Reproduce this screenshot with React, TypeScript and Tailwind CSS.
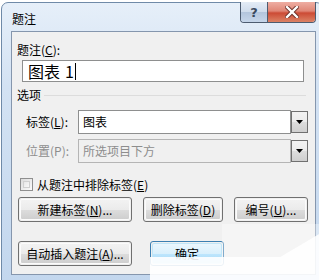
import React from "react";

const font = { fontFamily: '"Microsoft YaHei", "Noto Sans CJK SC", "Noto Sans", sans-serif' };

function Btn({ w, children, def }: { w: string; children: React.ReactNode; def?: boolean }) {
  return (
    <div
      className={`${w} h-[25px] rounded-[3px] border ${def ? "border-[#3c7fb1]" : "border-[#707070]"} p-px`}
    >
      <div
        className={`w-full h-full rounded-[2px] border ${def ? "border-[#c0e6f8]" : "border-[#fbfbfb]"} flex items-center justify-center text-[12px] text-black ${def ? "bg-[linear-gradient(to_bottom,#eaf6fd_0%,#d9f0fc_50%,#bee6fd_51%,#a7d9f5_100%)]" : "bg-[linear-gradient(to_bottom,#f2f2f2_0%,#ebebeb_50%,#dddddd_51%,#cfcfcf_100%)]"}`}
      >
        {children}
      </div>
    </div>
  );
}

function Arrow() {
  return (
    <div className="w-[17px] h-[22px] mt-px border border-[#707070] bg-[linear-gradient(to_bottom,#f2f2f2_0%,#ebebeb_50%,#dddddd_51%,#cfcfcf_100%)] flex items-center justify-center">
      <svg width="7" height="4" viewBox="0 0 7 4">
        <polygon points="0,0 7,0 3.5,4" fill="#000" />
      </svg>
    </div>
  );
}

export default function App() {
  return (
    <div className="w-[319px] h-[280px] bg-white relative overflow-hidden" style={font}>
      <div className="mt-[2px] ml-px w-[322px] h-[280px] rounded-t-[7px] border border-[#6f8aa8] bg-[linear-gradient(to_bottom,#e6eff9_0%,#d3e2f3_30%,#c3d7ee_100%)] flex flex-col">
        {/* title bar */}
        <div className="h-[28px] flex items-start">
          <div className="pl-[10px] pt-[8px] text-[12px] leading-[16px] text-black">题注</div>
          <div className="ml-auto mr-[6px] -mt-px flex h-[21px] rounded-b-[4px] border border-[#4d5c70] border-t-0 overflow-hidden">
            <div className="w-[27px] h-full bg-[linear-gradient(to_bottom,#e4ecf6_0%,#cfdcec_50%,#b3c5dc_51%,#c6d6ea_100%)] border-r border-[#4d5c70] flex items-center justify-center">
              <span className="text-[13px] font-bold text-[#3b4a5e] leading-none" style={{ fontFamily: '"DejaVu Sans", sans-serif' }}>?</span>
            </div>
            <div className="w-[47px] h-full bg-[linear-gradient(to_bottom,#eeaea3_0%,#e08676_45%,#cc4b35_55%,#dc8366_100%)] flex items-center justify-center">
              <svg width="14" height="12" viewBox="0 0 14 12">
                <path d="M2 1 L12 11 M12 1 L2 11" stroke="#6a2f28" strokeWidth="4.2" strokeLinecap="square" />
                <path d="M2 1 L12 11 M12 1 L2 11" stroke="#ffffff" strokeWidth="2.4" strokeLinecap="square" />
              </svg>
            </div>
          </div>
        </div>
        {/* client */}
        <div className="ml-[9px] w-[305px] h-[244px] bg-[#f0f0f0] border border-[#8596ad] flex flex-col text-[12px] leading-[16px] text-black">
          <div className="ml-[5px] mt-[10px] h-[16px]">
            题注(<span className="underline">C</span>):
          </div>
          <div className="ml-[10px] mt-[2px] w-[282px] h-[22px] border border-[#8e8f8f] bg-white flex items-center pl-[5px] text-[16px] leading-[20px]">
            <span>图表</span>
            <span className="ml-[5px]">1</span>
            <span className="ml-px w-px h-[17px] bg-black" />
          </div>
          <div className="mt-[5px] h-[16px] flex items-center">
            <span className="ml-[5px]">选项</span>
            <div className="flex-1 h-px bg-[#dcdcdc] ml-[3px] mr-[9px]" />
          </div>
          <div className="mt-[7px] flex items-center h-[24px]">
            <span className="ml-[14px] w-[52px]">
              标签(<span className="underline">L</span>):
            </span>
            <div className="w-[230px] h-[24px] flex">
              <div className="flex-1 border border-[#8e8f8f] bg-white flex items-center pl-[4px]">图表</div>
              <Arrow />
            </div>
          </div>
          <div className="mt-[5px] flex items-center h-[24px] text-[#8d8d8d]">
            <span className="ml-[14px] w-[52px]">位置(P):</span>
            <div className="w-[230px] h-[24px] flex">
              <div className="flex-1 border border-[#b5b5b5] bg-[#f0f0f0] flex items-center pl-[4px]">所选项目下方</div>
              <Arrow />
            </div>
          </div>
          <div className="mt-[15px] flex items-center h-[13px]">
            <div className="ml-[8px] w-[13px] h-[13px] border border-[#8f8f8f] bg-[linear-gradient(135deg,#dcdcdc,#fbfbfb)] p-[2px]">
              <div className="w-full h-full border border-[#d0d0d0] bg-[linear-gradient(135deg,#e8e8e8,#f8f8f8)]" />
            </div>
            <span className="ml-[4px]">
              从题注中排除标签(<span className="underline">E</span>)
            </span>
          </div>
          <div className="mt-[6px] ml-[6px] flex gap-[11px]">
            <Btn w="w-[114px]">
              新建标签(<span className="underline">N</span>)...
            </Btn>
            <Btn w="w-[80px]">
              删除标签(<span className="underline">D</span>)
            </Btn>
            <Btn w="w-[74px]">
              编号(<span className="underline">U</span>)...
            </Btn>
          </div>
          <div className="mt-[19px] ml-[6px] flex gap-[18px]">
            <Btn w="w-[114px]">
              自动插入题注(<span className="underline">A</span>)...
            </Btn>
            <Btn w="w-[74px]" def>
              确定
            </Btn>
          </div>
        </div>
      </div>
      {/* watermark overlay */}
      <svg className="absolute left-0 top-0" width="319" height="280" viewBox="0 0 319 280">
        <polygon points="150,257 280,257 319,234 319,280 150,280" fill="#ffffff" opacity="0.9" />
        <polygon points="222,224 319,224 319,234 280,257 222,257" fill="#ffffff" opacity="0.35" />
      </svg>
    </div>
  );
}
